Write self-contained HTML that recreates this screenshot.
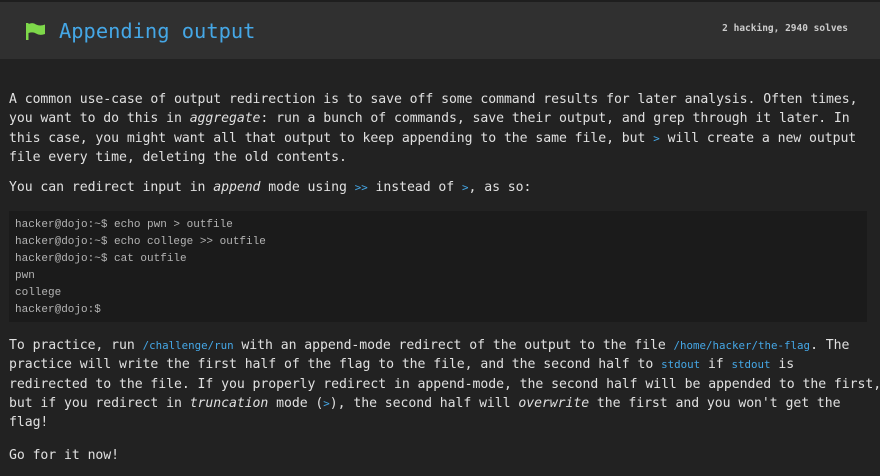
<!DOCTYPE html>
<html><head><meta charset="utf-8"><style>
html,body{margin:0;padding:0;background:#222;width:880px;height:476px;overflow:hidden}
body{font-family:"DejaVu Sans Mono",monospace;color:#e0e0e0;font-size:13.15px}
.top{height:2px;background:#1e1e1e}
.hdr{height:57px;background:#303030;position:relative}
.hdr h1{margin:0;position:absolute;left:59px;top:15px;font-weight:normal;font-size:20.4px;color:#45a7e6;line-height:28px}
.flag{position:absolute;left:26px;top:21px}
.stat{position:absolute;right:32px;top:21px;font-size:9.5px;font-weight:bold;color:#ccc}
p{margin:0;position:absolute;left:9px;width:862px;line-height:19.3px;white-space:nowrap;letter-spacing:-0.055px}
i{font-style:italic}
c{font-size:10.8px;color:#45a7e6;letter-spacing:0}
pre{position:absolute;left:9px;top:211px;width:858px;height:111px;margin:0;background:#1b1b1b;box-sizing:border-box;padding:6px 6px;font-family:"Liberation Mono",monospace;font-size:11px;line-height:17px;color:#b4b4b4}
</style></head><body>
<div class="top"></div>
<div class="hdr">
<svg class="flag" width="20" height="17" viewBox="0 0 20 17"><rect x="0" y="0" width="2.5" height="17" fill="#7ed84a"/><path d="M2.5 1 Q7 -1 10 1.5 Q14 3.5 19 1.5 L19 11 Q14 13 10 10.5 Q7 8.5 2.5 10 Z" fill="#7ed84a"/></svg>
<h1>Appending output</h1>
<div class="stat">2 hacking, 2940 solves</div>
</div>
<p style="top:90px">A common use-case of output redirection is to save off some command results for later analysis. Often times,<br>you want to do this in <i>aggregate</i>: run a bunch of commands, save their output, and grep through it later. In<br>this case, you might want all that output to keep appending to the same file, but <c>&gt;</c> will create a new output<br>file every time, deleting the old contents.</p>
<p style="top:178px">You can redirect input in <i>append</i> mode using <c>&gt;&gt;</c> instead of <c>&gt;</c>, as so:</p>
<pre>hacker@dojo:~$ echo pwn &gt; outfile
hacker@dojo:~$ echo college &gt;&gt; outfile
hacker@dojo:~$ cat outfile
pwn
college
hacker@dojo:$</pre>
<p style="top:336px">To practice, run <c>/challenge/run</c> with an append-mode redirect of the output to the file <c>/home/hacker/the-flag</c>. The<br>practice will write the first half of the flag to the file, and the second half to <c>stdout</c> if <c>stdout</c> is<br>redirected to the file. If you properly redirect in append-mode, the second half will be appended to the first,<br>but if you redirect in <i>truncation</i> mode (<c>&gt;</c>), the second half will <i>overwrite</i> the first and you won't get the<br>flag!</p>
<p style="top:446px">Go for it now!</p>
</body></html>
